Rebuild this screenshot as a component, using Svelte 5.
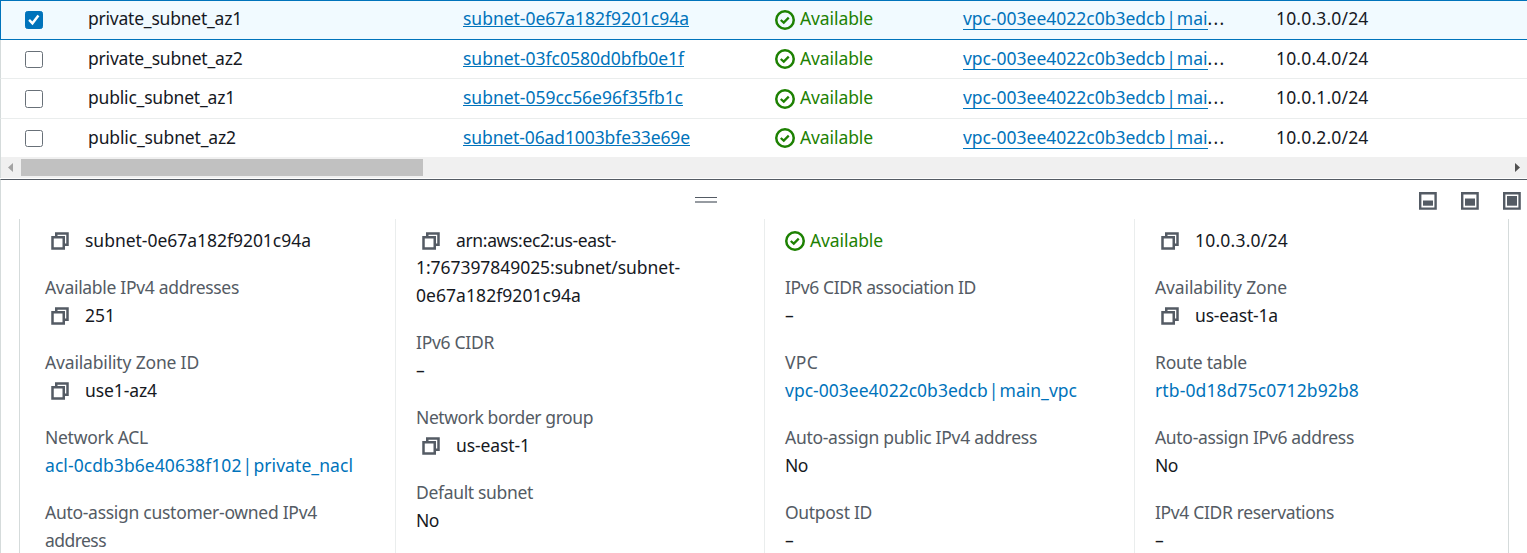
<script>
  const rows = [
    { name: 'private_subnet_az1', nw: 154, id: 'subnet-0e67a182f9201c94a', iw: 226, cidr: '10.0.3.0/24', selected: true },
    { name: 'private_subnet_az2', nw: 154.5, id: 'subnet-03fc0580d0bfb0e1f', iw: 221, cidr: '10.0.4.0/24' },
    { name: 'public_subnet_az1', nw: 147, id: 'subnet-059cc56e96f35fb1c', iw: 220, cidr: '10.0.1.0/24' },
    { name: 'public_subnet_az2', nw: 148, id: 'subnet-06ad1003bfe33e69e', iw: 227, cidr: '10.0.2.0/24' }
  ];

  const columns = [
    [
      { label: [['Subnet ID', 78]], value: [['subnet-0e67a182f9201c94a', 226]], copy: true },
      { label: [['Available IPv4 addresses', 194]], value: [['251', 30]], copy: true },
      { label: [['Availability Zone ID', 154]], value: [['use1-az4', 72]], copy: true },
      { label: [['Network ACL', 103]], value: [['acl-0cdb3b6e40638f102 | private_nacl', 308]], link: true },
      { label: [['Auto-assign customer-owned IPv4', 272], ['address', 61]], value: [] }
    ],
    [
      { label: [['Subnet ARN', 92]], value: [['arn:aws:ec2:us-east-', 160], ['1:767397849025:subnet/subnet-', 264], ['0e67a182f9201c94a', 165]], copy: true },
      { label: [['IPv6 CIDR', 78]], value: [['–', 9]] },
      { label: [['Network border group', 177]], value: [['us-east-1', 74]], copy: true },
      { label: [['Default subnet', 117]], value: [['No', 23]] }
    ],
    [
      { label: [['State', 41]], value: [['Available', 73]], ok: true },
      { label: [['IPv6 CIDR association ID', 191]], value: [['–', 9]] },
      { label: [['VPC', 33]], value: [['vpc-003ee4022c0b3edcb | main_vpc', 292]], link: true },
      { label: [['Auto-assign public IPv4 address', 252]], value: [['No', 23]] },
      { label: [['Outpost ID', 87]], value: [['–', 9]] }
    ],
    [
      { label: [['IPv4 CIDR', 78]], value: [['10.0.3.0/24', 93]], copy: true },
      { label: [['Availability Zone', 132]], value: [['us-east-1a', 83]], copy: true },
      { label: [['Route table', 92]], value: [['rtb-0d18d75c0712b92b8', 204]], link: true },
      { label: [['Auto-assign IPv6 address', 199]], value: [['No', 23]] },
      { label: [['IPv4 CIDR reservations', 179]], value: [['–', 9]] }
    ]
  ];

  // Tracks a run of text so that it fills the given width.
  function fit(node, width) {
    const natural = node.getBoundingClientRect().width;
    const count = node.textContent.length;
    node.style.letterSpacing = `${(width - natural) / count}px`;
  }
</script>

{#snippet check()}
  <svg class="ok" viewBox="0 0 16 16"><circle cx="8" cy="8" r="7" /><path d="m4.6 8 2.4 2.1 4-4" /></svg>
{/snippet}

{#snippet copyIcon()}
  <svg class="copy" viewBox="0 0 16 16"><path d="M2 5h9v9H2z" /><path d="M5 5V2h9v9h-3" /></svg>
{/snippet}

<div class="page">
  <div class="table">
    {#each rows as r}
      <div class="row" class:selected={r.selected}>
        <span class="cell pick">
          <span class="box" class:checked={r.selected}>
            {#if r.selected}<svg viewBox="0 0 14 14"><path d="m2.6 7.2 3 3 5.4-7" /></svg>{/if}
          </span>
        </span>
        <span class="cell text"><span class="t" use:fit={r.nw}>{r.name}</span></span>
        <span class="cell text"><span class="t a" use:fit={r.iw}>{r.id}</span></span>
        <span class="cell state">{@render check()}<span class="t status" use:fit={73}>Available</span></span>
        <span class="cell vpc"><span class="t b" use:fit={244.5}>vpc-003ee4022c0b3edcb | mai</span><span class="t dots">...</span></span>
        <span class="cell text"><span class="t" use:fit={92.5}>{r.cidr}</span></span>
      </div>
    {/each}
  </div>

  <div class="scroll">
    <svg viewBox="0 0 20 21"><path d="M12 6v9L7 10.500z" fill="#a3a3a3" /></svg>
    <div class="thumb"></div>
    <svg class="end" viewBox="0 0 20 21"><path d="M8 6v9l5-4.500z" fill="#505050" /></svg>
  </div>

  <div class="panel">
    <div class="bar">
      <div class="grip"></div>
      <div class="sizes">
        {#each [8.5, 6.500, 4] as top}
          <svg viewBox="0 0 18 18"><path d="M1.200 1.200h15.400v15.400H1.200z" fill="none" stroke="#545b64" stroke-width="2.400" /><path d={`M4 ${top}h10V13.700H4z`} fill="#545b64" /></svg>
        {/each}
      </div>
    </div>
    <div class="details">
      {#each columns as col}
        <div class="col">
          {#each col as item}
            <div class="item">
              {#each item.label as [text, w]}
                <div class="line label"><span class="t" use:fit={w}>{text}</span></div>
              {/each}
              {#each item.value as [text, w], i}
                <div class="line" class:link={item.link} class:state={item.ok}>
                  {#if item.copy && i === 0}{@render copyIcon()}{/if}
                  {#if item.ok}{@render check()}{/if}
                  <span class="t" use:fit={w}>{text}</span>
                </div>
              {/each}
            </div>
          {/each}
        </div>
      {/each}
    </div>
  </div>
</div>

<style>
  :global(body) { background: #fff; overflow: hidden; }
  .page {
    box-sizing: border-box;
    width: 1527px;
    height: 553px;
    overflow: hidden;
    display: flex;
    flex-direction: column;
    background: #fff;
    color: #16191f;
    font: 17.5px/27.5px "Noto Sans", "Open Sans", sans-serif;
  }
  .t { display: inline-block; white-space: pre; }
  .table { display: grid; grid-template-rows: 40px 39px 40px 38px; }
  .row {
    --lift: 1px;
    --drop: 1px;
    box-sizing: border-box;
    display: grid;
    grid-template-columns: 87px 375px 312px 188px 313px 1fr;
    align-items: center;
    border-left: 1px solid #d5dbdb;
    border-bottom: 1px solid #eaeded;
  }
  .row:nth-child(3) { --lift: 2px; --drop: 0px; }
  .row:last-child { border-bottom: 0; }
  .row.selected { --lift: 3px; --drop: -1px; border: 1px solid #0073bb; border-right: 0; background: #f1faff; }
  .cell { display: flex; align-items: center; height: 28px; }
  .text, .status, .dots { padding-bottom: var(--lift); box-sizing: border-box; }
  .pick { padding-left: 24px; }
  .box {
    box-sizing: border-box;
    width: 18px;
    height: 17.5px;
    margin-top: 1px;
    border: 1.250px solid #687078;
    border-radius: 2.500px;
    background: #fff;
  }
  .selected .box { margin-top: 0; }
  .box.checked { border-color: #0073bb; background: #0073bb; display: flex; }
  .box svg { width: 16px; height: 15.500px; fill: none; stroke: #fff; stroke-width: 2.200; }
  .a, .b { color: #0073bb; line-height: 21px; }
  .a { text-decoration: underline; text-decoration-thickness: 1px; text-underline-offset: 1px; text-decoration-skip-ink: none; }
  .b { height: 20px; margin-top: var(--drop); border-bottom: 1px solid #0073bb; line-height: 19px; word-spacing: -3.500px; }
  .dots { letter-spacing: 1.300px; }
  .state { color: #1d8102; gap: 5px; }
  .ok, .copy { flex: none; width: 20px; height: 20px; fill: none; stroke-width: 2; }
  .ok { stroke: #1d8102; }
  .ok path { stroke-width: 1.800; }
  .copy { stroke: #545b64; margin: 0 15px 0 5px; }
  .line .copy, .line .ok { margin-top: 1.500px; }

  .scroll { display: flex; align-items: center; height: 21px; margin-bottom: 1px; background: #f0f0f0; border-left: 1px solid #d5dbdb; }
  .scroll svg { width: 20px; height: 21px; }
  .thumb { width: 402px; height: 17px; background: #c1c1c1; }
  .end { margin-left: auto; }

  .panel { flex: 1; min-height: 0; display: flex; flex-direction: column; border-top: 1px solid #545b64; border-left: 1px solid #d5dbdb; }
  .bar { display: grid; grid-template-columns: 694px 1fr; height: 39px; flex: none; }
  .grip { grid-column: 2; grid-row: 1; width: 22px; height: 3px; margin-top: 17px; border-top: 1px solid #545b64; border-bottom: 2px solid #969ba1; }
  .sizes { grid-column: 2; grid-row: 1; justify-self: end; display: flex; gap: 24px; padding: 12px 6px 0 0; }
  .sizes svg { width: 18px; height: 18px; }
  .details {
    flex: 1;
    min-height: 0;
    overflow: hidden;
    display: grid;
    grid-template-columns: 376px 369px 370px 374px;
    margin-left: 18px;
    width: 1490px;
    box-sizing: border-box;
    border-right: 1px solid #d5dbdb;
  }
  .col { border-left: 1px solid #eaeded; padding-left: 20px; display: flex; flex-direction: column; gap: 20px; margin-top: -20px; }
  .col:first-child { border-left-color: #d5dbdb; padding-left: 25px; }
  .line { display: flex; align-items: center; height: 27.500px; white-space: nowrap; }
  .label { color: #545b64; }
  .link { color: #0073bb; word-spacing: -3.500px; }
  .line.state { color: #1d8102; }
</style>
